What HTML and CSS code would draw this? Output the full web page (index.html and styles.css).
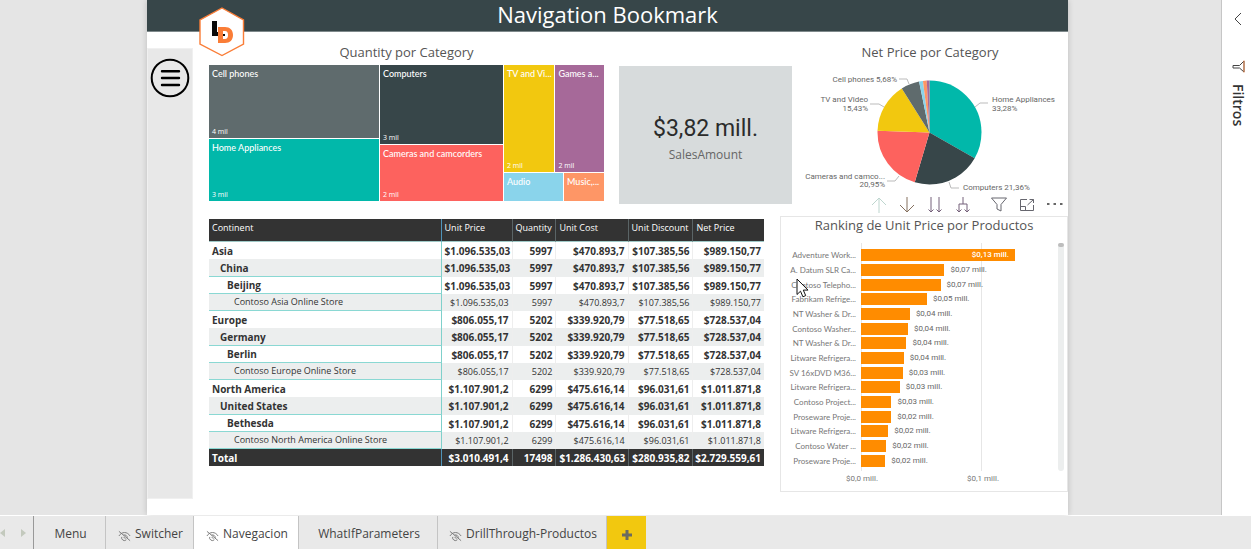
FILE: index.html
```html
<!DOCTYPE html>
<html lang="es">
<head>
<meta charset="utf-8">
<title>Navigation Bookmark</title>
<link rel="stylesheet" href="styles.css">
</head>
<body>
<div class="workspace">
  <main class="page">
    <header class="page-header">
      <h1>Navigation Bookmark</h1>
      <svg class="logo" viewBox="0 0 46 50" aria-label="LD">
        <path d="M23 1 44.500 13V37L23 48.500 1 37V13Z" fill="#fff" stroke="#fa7d37" stroke-width="1.400"/>
        <path d="M13 14h5v11h4v4h-9z" fill="#0a0a0a"/>
        <path fill-rule="evenodd" d="M19 20h7c5 0 8 3 8 8s-3 8-8 8h-7zM24 24v8h2c2 0 3-1.500 3-4s-1-4-3-4z" fill="#fa7d37"/>
        <path d="M18 25h1v4h-1zM24 27h2v2h-2z" fill="#0a0a0a"/>
      </svg>
    </header>
    <div class="page-body">
      <nav class="rail">
        <button class="menu-button" aria-label="Menú">
          <svg viewBox="0 0 40 40"><circle cx="20" cy="20" r="18.300" fill="none" stroke="#000" stroke-width="2"/><path d="M12 13.200h17M12 20h17M12 27h17" stroke="#000" stroke-width="2.400" stroke-linecap="round"/></svg>
        </button>
      </nav>
      <div class="visuals">
        <div class="row-top">
          <section class="visual">
            <h2>Quantity por Category</h2>
            <div class="treemap">
              <div class="tm-col tm-a">
                <div class="tile slate t-cell"><span>Cell phones</span><small>4 mil</small></div>
                <div class="tile teal t-home"><span>Home Appliances</span><small>3 mil</small></div>
              </div>
              <div class="tm-col tm-b">
                <div class="tile dark t-comp"><span>Computers</span><small>3 mil</small></div>
                <div class="tile red t-cam"><span>Cameras and camcorders</span><small>2 mil</small></div>
              </div>
              <div class="tm-col tm-c">
                <div class="tm-row t-upper">
                  <div class="tile yellow t-tv"><span>TV and Vi...</span><small>2 mil</small></div>
                  <div class="tile purple t-games"><span>Games a...</span><small>2 mil</small></div>
                </div>
                <div class="tm-row t-lower">
                  <div class="tile sky t-audio"><span>Audio</span></div>
                  <div class="tile orange t-music"><span>Music,...</span></div>
                </div>
              </div>
            </div>
          </section>
          <section class="card">
            <div class="card-value">$3,82 mill.</div>
            <div class="card-label">SalesAmount</div>
          </section>
          <section class="visual">
            <h2>Net Price por Category</h2>
            <svg class="pie" viewBox="0 0 276 128">
              <g fill="none" stroke-width="52" transform="rotate(-90 137.500 66.500)">
                <circle cx="137.500" cy="66.500" r="26" pathLength="100" stroke="#01b8aa" stroke-dasharray="33.280 66.720"/>
                <circle cx="137.500" cy="66.500" r="26" pathLength="100" stroke="#374649" stroke-dasharray="21.360 78.640" stroke-dashoffset="-33.280"/>
                <circle cx="137.500" cy="66.500" r="26" pathLength="100" stroke="#fd625e" stroke-dasharray="20.950 79.050" stroke-dashoffset="-54.640"/>
                <circle cx="137.500" cy="66.500" r="26" pathLength="100" stroke="#f2c80f" stroke-dasharray="15.430 84.570" stroke-dashoffset="-75.590"/>
                <circle cx="137.500" cy="66.500" r="26" pathLength="100" stroke="#5f6b6d" stroke-dasharray="5.680 94.320" stroke-dashoffset="-91.020"/>
                <circle cx="137.500" cy="66.500" r="26" pathLength="100" stroke="#8ad4eb" stroke-dasharray="1.200 98.800" stroke-dashoffset="-96.700"/>
                <circle cx="137.500" cy="66.500" r="26" pathLength="100" stroke="#fe9666" stroke-dasharray="1.200 98.800" stroke-dashoffset="-97.900"/>
                <circle cx="137.500" cy="66.500" r="26" pathLength="100" stroke="#a66999" stroke-dasharray="0.900 99.100" stroke-dashoffset="-99.100"/>
              </g>
              <g class="leaders">
                <path d="M183 41l5-4h8M157 116l2 6h8M107 110l-4 5h-8M92 41l-5-3h-9M117 18l-2-5h-8"/>
              </g>
              <g class="pie-labels">
                <text x="200" y="36">Home Appliances</text>
                <text x="200" y="45">33,28%</text>
                <text x="171" y="124">Computers 21,36%</text>
                <text x="93" y="113" text-anchor="end">Cameras and camco...</text>
                <text x="93" y="121" text-anchor="end">20,95%</text>
                <text x="76" y="36" text-anchor="end">TV and Video</text>
                <text x="76" y="45" text-anchor="end">15,43%</text>
                <text x="105" y="16" text-anchor="end">Cell phones 5,68%</text>
              </g>
            </svg>
            <div class="toolbar">
              <button class="faint" aria-label="Rastrear agrupando datos"><svg viewBox="0 0 16 16"><path d="M8 16V1M1 8l7-7 7 7"/></svg></button>
              <button class="gold" aria-label="Explorar en profundidad"><svg viewBox="0 0 16 16"><path d="M8 0v15M1 8l7 7 7-7"/></svg></button>
              <button class="plum" aria-label="Siguiente nivel"><svg viewBox="0 0 16 16"><path d="M4 0v15M1.500 12.500l2.500 2.500 2.500-2.500M12 0v15M9.500 12.500l2.500 2.500 2.500-2.500"/></svg></button>
              <button class="plum" aria-label="Expandir nivel"><svg viewBox="0 0 16 16"><path d="M8 0v7M4 15V7h8v8M1.500 12.500l2.500 2.500 2.500-2.500M9.500 12.500l2.500 2.500 2.500-2.500"/></svg></button>
              <button class="spaced" aria-label="Filtros"><svg viewBox="0 0 16 16"><path d="M.5 1h15L10 7.500V14l-4-2V7.500z"/></svg></button>
              <button aria-label="Modo de enfoque"><svg viewBox="0 0 16 16"><path d="M8 2.500H1.500v11h13V8M1.500 9.500h5v4M8.500 8l6-5.500M10.500 2.500h4V6"/></svg></button>
              <button class="more" aria-label="Más opciones"><svg viewBox="0 0 16 16"><path d="M0 6h2.500v2H0zM6.500 6H9v2H6.500zM13 6h2.500v2H13z"/></svg></button>
            </div>
          </section>
        </div>
        <div class="row-bottom">
          <table class="matrix">
            <colgroup><col class="c1"><col class="c2"><col class="c3"><col class="c4"><col class="c5"><col class="c6"></colgroup>
            <thead><tr><th scope="col">Continent</th><th scope="col">Unit Price</th><th scope="col">Quantity</th><th scope="col">Unit Cost</th><th scope="col">Unit Discount</th><th scope="col">Net Price</th></tr></thead>
            <tbody>
              <tr class="l1"><th scope="row">Asia</th><td>$1.096.535,03</td><td>5997</td><td>$470.893,7</td><td>$107.385,56</td><td>$989.150,77</td></tr>
              <tr class="l2"><th scope="row">China</th><td>$1.096.535,03</td><td>5997</td><td>$470.893,7</td><td>$107.385,56</td><td>$989.150,77</td></tr>
              <tr class="l3"><th scope="row">Beijing</th><td>$1.096.535,03</td><td>5997</td><td>$470.893,7</td><td>$107.385,56</td><td>$989.150,77</td></tr>
              <tr class="l4"><th scope="row">Contoso Asia Online Store</th><td>$1.096.535,03</td><td>5997</td><td>$470.893,7</td><td>$107.385,56</td><td>$989.150,77</td></tr>
              <tr class="l1"><th scope="row">Europe</th><td>$806.055,17</td><td>5202</td><td>$339.920,79</td><td>$77.518,65</td><td>$728.537,04</td></tr>
              <tr class="l2"><th scope="row">Germany</th><td>$806.055,17</td><td>5202</td><td>$339.920,79</td><td>$77.518,65</td><td>$728.537,04</td></tr>
              <tr class="l3"><th scope="row">Berlin</th><td>$806.055,17</td><td>5202</td><td>$339.920,79</td><td>$77.518,65</td><td>$728.537,04</td></tr>
              <tr class="l4"><th scope="row">Contoso Europe Online Store</th><td>$806.055,17</td><td>5202</td><td>$339.920,79</td><td>$77.518,65</td><td>$728.537,04</td></tr>
              <tr class="l1"><th scope="row">North America</th><td>$1.107.901,2</td><td>6299</td><td>$475.616,14</td><td>$96.031,61</td><td>$1.011.871,8</td></tr>
              <tr class="l2"><th scope="row">United States</th><td>$1.107.901,2</td><td>6299</td><td>$475.616,14</td><td>$96.031,61</td><td>$1.011.871,8</td></tr>
              <tr class="l3"><th scope="row">Bethesda</th><td>$1.107.901,2</td><td>6299</td><td>$475.616,14</td><td>$96.031,61</td><td>$1.011.871,8</td></tr>
              <tr class="l4"><th scope="row">Contoso North America Online Store</th><td>$1.107.901,2</td><td>6299</td><td>$475.616,14</td><td>$96.031,61</td><td>$1.011.871,8</td></tr>
            </tbody>
            <tfoot><tr><th scope="row">Total</th><td>$3.010.491,4</td><td>17498</td><td>$1.286.430,63</td><td>$280.935,82</td><td>$2.729.559,61</td></tr></tfoot>
          </table>
          <section class="ranking">
            <h2>Ranking de Unit Price por Productos</h2>
            <div class="chart">
              <div class="names">
                <span>Adventure Work...</span><span>A. Datum SLR Ca...</span><span>Contoso Telepho...</span><span>Fabrikam Refrige...</span><span>NT Washer &amp; Dr...</span><span>Contoso Washer...</span><span>NT Washer &amp; Dr...</span><span>Litware Refrigera...</span><span>SV 16xDVD M36...</span><span>Litware Refrigera...</span><span>Contoso Project...</span><span>Proseware Proje...</span><span>Litware Refrigera...</span><span>Contoso Water ...</span><span>Proseware Proje...</span>
              </div>
              <div class="plot">
                <div class="bar-row"><div class="bar" style="width:79.4%"><b>$0,13 mill.</b></div></div>
                <div class="bar-row"><div class="bar" style="width:43%"></div><span>$0,07 mill.</span></div>
                <div class="bar-row"><div class="bar" style="width:41%"></div><span>$0,07 mill.</span></div>
                <div class="bar-row"><div class="bar" style="width:34%"></div><span>$0,05 mill.</span></div>
                <div class="bar-row"><div class="bar" style="width:25.2%"></div><span>$0,04 mill.</span></div>
                <div class="bar-row"><div class="bar" style="width:24.2%"></div><span>$0,04 mill.</span></div>
                <div class="bar-row"><div class="bar" style="width:23.4%"></div><span>$0,04 mill.</span></div>
                <div class="bar-row"><div class="bar" style="width:22%"></div><span>$0,04 mill.</span></div>
                <div class="bar-row"><div class="bar" style="width:21.5%"></div><span>$0,03 mill.</span></div>
                <div class="bar-row"><div class="bar" style="width:20%"></div><span>$0,03 mill.</span></div>
                <div class="bar-row"><div class="bar" style="width:15.7%"></div><span>$0,03 mill.</span></div>
                <div class="bar-row"><div class="bar" style="width:15.6%"></div><span>$0,02 mill.</span></div>
                <div class="bar-row"><div class="bar" style="width:14%"></div><span>$0,02 mill.</span></div>
                <div class="bar-row"><div class="bar" style="width:13%"></div><span>$0,02 mill.</span></div>
                <div class="bar-row"><div class="bar" style="width:12.5%"></div><span>$0,02 mill.</span></div>
              </div>
              <div class="scroll"><div class="thumb"></div></div>
              <div class="axis"><span>$0,0 mill.</span><span>$0,1 mill.</span></div>
            </div>
            <svg class="cursor" viewBox="0 0 13 20"><path d="M1 1v15.500l3.500-3.300 2.400 5.600 2.800-1.200-2.400-5.500H12z" fill="#fff" stroke="#111"/></svg>
          </section>
        </div>
      </div>
    </div>
  </main>
</div>
<aside class="filters">
  <button aria-label="Expandir"><svg class="chevron" viewBox="0 0 8 14"><path d="M7 1 1 7l6 6"/></svg></button>
  <svg class="funnel" viewBox="0 0 13 13"><path d="M12 1v11L7.500 8H1V5.500h6.500z" fill="none" stroke="#444"/><path d="M12 .5v12" stroke="#e8854a"/></svg>
  <span class="filters-title">Filtros</span>
</aside>
<footer class="tabs">
  <div class="pager">
    <button aria-label="Anterior"><svg viewBox="0 0 5 8"><path d="M5 0v8L0 4z"/></svg></button>
    <button aria-label="Siguiente"><svg viewBox="0 0 5 8"><path d="M0 0v8l5-4z"/></svg></button>
  </div>
  <button class="tab w1">Menu</button>
  <button class="tab w2"><svg viewBox="0 0 14 12"><path d="M1 6c3-5 9-5 12 0M4 7a3 3 0 0 0 5 3M6 5a3 3 0 0 1 4 3M1 1l12 10M6 7l2 2"/></svg>Switcher</button>
  <button class="tab w3 active"><svg viewBox="0 0 14 12"><path d="M1 6c3-5 9-5 12 0M4 7a3 3 0 0 0 5 3M6 5a3 3 0 0 1 4 3M1 1l12 10M6 7l2 2"/></svg>Navegacion</button>
  <button class="tab w4">WhatIfParameters</button>
  <button class="tab w5"><svg viewBox="0 0 14 12"><path d="M1 6c3-5 9-5 12 0M4 7a3 3 0 0 0 5 3M6 5a3 3 0 0 1 4 3M1 1l12 10M6 7l2 2"/></svg>DrillThrough-Productos</button>
  <button class="add" aria-label="Nueva página"><svg viewBox="0 0 12 12"><path d="M6 1v10M1 6h10"/></svg></button>
</footer>
</body>
</html>
```
FILE: styles.css
```css
* { box-sizing: border-box; }
body {
  margin: 0;
  min-height: 100vh;
  display: grid;
  grid-template-columns: minmax(0, 1fr) 30px;
  grid-template-rows: 1fr 33px;
  row-gap: 1px;
  background: #fff;
  font-family: "Open Sans", "Noto Sans", sans-serif;
  color: #333;
}
button { border: 0; padding: 0; background: none; font: inherit; color: inherit; display: flex; align-items: center; justify-content: center; }
svg { display: block; }
h1, h2 { margin: 0; font-weight: 400; }

.workspace { background: #e5e5e5; display: grid; grid-template-columns: 147fr 921fr 153fr; }
.page { grid-column: 2; min-width: 0; background: #fff; display: flex; flex-direction: column; box-shadow: 0 0 6px rgba(0,0,0,.18); }
.page-header { position: relative; height: 32px; background: #374649; border-bottom: 1px solid #7e898b; color: #fff; text-align: center; }
.page-header h1 { font-size: 22px; line-height: 28px; }
.logo { position: absolute; left: 52px; top: 7px; width: 46px; height: 50px; }
.page-body { flex: 1; display: flex; }
.rail { width: 46px; margin: 16px 0; background: #e8e8e8; border: 1px solid #f0f0f0; }
.menu-button { width: 40px; height: 40px; margin: 9px 2px; }
.menu-button svg { width: 40px; }
.visuals { flex: 1; min-width: 0; padding-left: 16px; }
.row-top { display: grid; grid-template-columns: 395fr 188fr 276fr; height: 184px; }
.visual { min-width: 0; display: flex; flex-direction: column; }
.visual h2, .ranking h2 { font-size: 13px; line-height: 18px; color: #555; text-align: center; }
.visual h2 { margin-top: 11px; }

.treemap { display: flex; gap: 1px; height: 136px; margin-top: 4px; }
.tm-col, .tm-row { display: flex; gap: 1px; min-width: 0; min-height: 0; }
.tm-col { flex-direction: column; }
.tm-a { flex: 170; } .tm-b { flex: 123; } .tm-c { flex: 100; }
.t-cell { flex: 73; } .t-home { flex: 62; }
.t-comp { flex: 80; } .t-cam { flex: 55; }
.t-upper { flex: 107; } .t-lower { flex: 28; }
.t-tv { flex: 51; } .t-games { flex: 49; }
.t-audio { flex: 61; } .t-music { flex: 39; }
.tile { flex-basis: 0; min-width: 0; min-height: 0; padding: 2px 3px 1px; display: flex; flex-direction: column; justify-content: space-between; color: #fff; }
.tile span { font-family: Lato, sans-serif; font-size: 9px; line-height: 14px; white-space: nowrap; font-weight: 500; }
.tile small { font-size: 7px; line-height: 10px; }
.slate { background: #5f6b6d; } .teal { background: #01b8aa; } .dark { background: #374649; } .red { background: #fd625e; }
.yellow { background: #f2c80f; } .purple { background: #a66999; } .sky { background: #8ad4eb; } .orange { background: #fe9666; }

.card { margin: 34px 0 0 15px; padding-top: 12px; height: 138px; background: #d7dbdc; display: flex; flex-direction: column; align-items: center; justify-content: center; }
.card-value { font-family: Roboto, sans-serif; font-size: 23px; line-height: 28px; color: #2b2b2b; }
.card-label { font-size: 12px; line-height: 24px; color: #666; }

.pie { width: 100%; height: 128px; margin-top: 5px; }
.leaders { fill: none; stroke: #bbb; }
.pie-labels { font-family: Roboto, sans-serif; font-size: 8px; fill: #666; }
.toolbar { display: flex; justify-content: flex-end; gap: 12px; padding-right: 5px; margin-top: 3px; }
.toolbar button { width: 16px; height: 16px; }
.toolbar svg { width: 16px; fill: none; stroke: #66666e; stroke-width: 1; }
.toolbar .faint { opacity: .4; }
.toolbar .faint svg { stroke: #5f9a88; }
.toolbar .gold svg { stroke: #85705e; }
.toolbar .plum svg { stroke: #75607a; }
.toolbar .spaced { margin-left: 8px; }
.toolbar .more svg { fill: #666; stroke: none; }

.row-bottom { display: grid; grid-template-columns: 555fr 288fr; column-gap: 16px; align-items: start; }
.matrix { width: 100%; margin-top: 3px; table-layout: fixed; border-collapse: separate; border-spacing: 0; font-size: 10px; line-height: 14px; }
.c1 { width: 41.9%; } .c2 { width: 12.8%; } .c3 { width: 7.9%; } .c4 { width: 13%; } .c5 { width: 11.7%; } .c6 { width: 12.7%; }
.matrix th, .matrix td { padding: 0 3px; height: 17px; white-space: nowrap; text-align: right; font-weight: 700; border-right: 1px solid #eee; }
.matrix td:last-child { border-right: 0; padding-left: 0; }
.matrix th:first-child { text-align: left; border-right: 1px solid #7fd0cb; }
.matrix thead th { height: 23px; padding: 0 3px 4px; background: #333; color: #fff; text-align: left; font-size: 9px; font-weight: 500; border-right-color: #5a6466; border-bottom: 1px solid #9fc9c7; }
.matrix thead th:last-child { border-right: 0; }
.matrix thead th:first-child, .matrix tfoot th:first-child { border-right-color: #4f93b8; }
.matrix tfoot th, .matrix tfoot td { background: #333; color: #fff; border-right-color: #5a6466; }
.matrix .l2 > *, .matrix .l4 > * { background: #eceeee; }
.matrix .l2 > * { height: 18px; }
.matrix .l4 > * { font-size: 9px; font-weight: 400; }
.matrix .l2 th, .matrix .l3 th, .matrix .l4 th { border-bottom: 1px solid #8ad8d3; }
.matrix .l2 th { padding-left: 11px; } .matrix .l3 th { padding-left: 18px; } .matrix .l4 th { padding-left: 25px; }

.ranking { position: relative; min-width: 0; border: 1px solid #e6e6e6; height: 276px; }
.ranking h2 { line-height: 16px; }
.chart { display: grid; grid-template-columns: 80px 1fr 6px; grid-template-rows: 228px 16px; margin: 10px 3px 0 0; }
.names { padding: 5px 5px 3px 0; display: flex; flex-direction: column; font-family: Lato, sans-serif; font-size: 8px; line-height: 12px; color: #777; text-align: right; white-space: nowrap; }
.names span { flex: 1; display: flex; align-items: center; justify-content: flex-end; }
.plot { margin-right: 3px; padding: 5px 0 3px; display: flex; flex-direction: column; background: linear-gradient(#e6e6e6, #e6e6e6) 0 0 / 1px 100% no-repeat, linear-gradient(#e6e6e6, #e6e6e6) 62.4% 0 / 1px 100% no-repeat; }
.bar-row { flex: 1; display: flex; align-items: center; gap: 6px; font-family: Roboto, sans-serif; font-size: 8px; line-height: 12px; color: #666; white-space: nowrap; }
.bar { height: 12px; background: #ff8c00; text-align: right; flex: none; }
.bar b { color: #fff; font-weight: 500; padding-right: 6px; }
.scroll { background: #eceeee; border-radius: 3px; }
.thumb { height: 4px; background: #bdbdbd; border-radius: 2px; }
.axis { grid-column: 2; display: flex; margin-left: -15px; gap: 91px; font-family: Roboto, sans-serif; font-size: 8px; line-height: 16px; color: #777; white-space: nowrap; }
.axis span { width: 30px; }
.cursor { position: absolute; left: 15px; top: 61px; width: 13px; height: 20px; }

.filters { border-left: 1px solid #c6c6c6; display: flex; flex-direction: column; align-items: center; padding: 12px 0 0 3px; }
.chevron { width: 8px; height: 14px; fill: none; stroke: #444; stroke-width: 1; }
.funnel { width: 13px; height: 13px; margin: 34px 0 11px; }
.filters-title { writing-mode: vertical-rl; font-size: 14px; line-height: 20px; font-weight: 600; }

.tabs { grid-column: 1 / -1; background: #e9e9e9; display: flex; font-size: 12px; color: #444; font-weight: 500; }
.pager { width: 34px; display: flex; align-items: center; justify-content: space-between; padding-right: 7px; border-right: 1px solid #999; }
.pager svg { width: 5px; height: 8px; fill: #c3c9bd; }
.tab { gap: 4px; padding: 2px 2px 0 4px; border-right: 1px solid #c4c4c4; white-space: nowrap; }
.tab svg { width: 13px; height: 12px; margin-top: 4px; fill: none; stroke: #777; }
.w1 { width: 72px; } .w2 { width: 88px; } .w3 { width: 105px; } .w4 { width: 139px; } .w5 { width: 169px; }
.active { background: #fff; }
.add { width: 39px; background: #f2c80f; }
.add svg { width: 12px; margin-top: 4px; stroke: #6b6b60; stroke-width: 3; }
```
